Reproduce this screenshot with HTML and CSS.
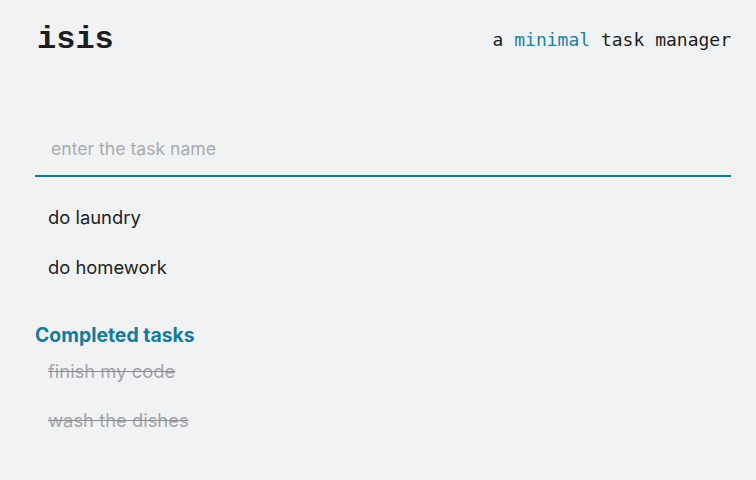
FILE: index.html
```html
<!DOCTYPE html>
<html>
<head>
<meta charset="utf-8">
<link rel="stylesheet" href="styles.css">
</head>
<body>
<div class="app">
  <header class="header">
    <h1 class="logo">isis</h1>
    <p class="tagline">a <span class="accent">minimal</span> task manager</p>
  </header>
  <input class="task-input" type="text" placeholder="enter the task name">
  <ul class="tasks">
    <li class="task">do laundry</li>
    <li class="task">do homework</li>
  </ul>
  <h2 class="section-title">Completed tasks</h2>
  <ul class="tasks done">
    <li class="task">finish my code</li>
    <li class="task">wash the dishes</li>
  </ul>
</div>
</body>
</html>
```
FILE: styles.css
```css
html, body {
  margin: 0;
  padding: 0;
  background: #f1f2f4;
}
body {
  font-family: Inter, "Noto Sans", sans-serif;
  color: #222;
}
.app {
  padding: 18px 25px 0 35px;
}
.header {
  display: flex;
  justify-content: space-between;
  align-items: center;
  height: 40px;
}
.logo {
  margin: 2px 0 0 2px;
  font-family: "Liberation Mono", monospace;
  font-size: 32px;
  font-weight: bold;
  color: #1d1d1f;
}
.tagline {
  margin: 2px 0 0 0;
  font-family: "DejaVu Sans Mono", monospace;
  font-size: 18px;
  color: #1d1d1f;
}
.accent {
  color: #1a80a6;
}
.task-input {
  display: block;
  box-sizing: border-box;
  width: 100%;
  margin-top: 66px;
  height: 53px;
  padding: 0 16px 2px;
  border: none;
  border-bottom: 2px solid #137a9c;
  background: transparent;
  font-family: Inter, sans-serif;
  font-size: 17.6px;
  color: #222;
  outline: none;
}
.task-input::placeholder {
  color: #a9abb0;
}
.tasks {
  list-style: none;
  margin: 15px 0 0 0;
  padding: 0;
}
.task {
  height: 50px;
  line-height: 50px;
  padding-left: 13px;
  font-size: 18.4px;
  color: #222;
}
.section-title {
  margin: 31px 0 0 0;
  font-size: 19.4px;
  font-weight: 700;
  color: #177a9a;
  line-height: 24px;
}
.tasks.done {
  margin-top: 0;
}
.done .task {
  height: 49px;
  line-height: 49px;
  color: #a3a4a8;
  text-decoration: line-through;
  text-decoration-color: #8c8d91;
}
```
